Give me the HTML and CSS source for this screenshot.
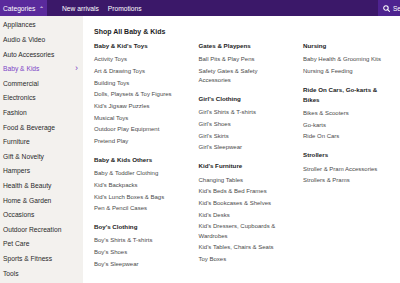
FILE: index.html
```html
<!DOCTYPE html>
<html lang="en">
<head>
    <meta charset="UTF-8">
    <meta name="viewport" content="width=device-width, initial-scale=1.0">
    <title>Categories</title>
    <link rel="stylesheet" href="styles.css">
</head>
<body>
    <header class="topbar">
        <button class="cat-btn">Categories <span class="caret">&#8963;</span></button>
        <nav class="top-links">
            <a href="#">New arrivals</a>
            <a href="#">Promotions</a>
        </nav>
        <button class="search-btn">
            <svg width="7" height="7" viewBox="0 0 10 10"><circle cx="4.2" cy="4.2" r="3.2" fill="none" stroke="#fff" stroke-width="1.5"/><line x1="6.6" y1="6.6" x2="9.2" y2="9.2" stroke="#fff" stroke-width="1.5" stroke-linecap="round"/></svg>
            <span>Search</span>
        </button>
    </header>

    <div class="menu">
        <ul class="sidebar">
            <li>Appliances</li>
            <li>Audio &amp; Video</li>
            <li>Auto Accessories</li>
            <li class="active">Baby &amp; Kids <span class="chev">&rsaquo;</span></li>
            <li>Commercial</li>
            <li>Electronics</li>
            <li>Fashion</li>
            <li>Food &amp; Beverage</li>
            <li>Furniture</li>
            <li>Gift &amp; Novelty</li>
            <li>Hampers</li>
            <li>Health &amp; Beauty</li>
            <li>Home &amp; Garden</li>
            <li>Occasions</li>
            <li>Outdoor Recreation</li>
            <li>Pet Care</li>
            <li>Sports &amp; Fitness</li>
            <li>Tools</li>
        </ul>

        <main class="panel">
            <h1 class="panel-title">Shop All Baby &amp; Kids</h1>
            <div class="columns">
                <div class="col">
                    <section class="group">
                        <h2>Baby &amp; Kid's Toys</h2>
                        <ul>
                            <li>Activity Toys</li>
                            <li>Art &amp; Drawing Toys</li>
                            <li>Building Toys</li>
                            <li>Dolls, Playsets &amp; Toy Figures</li>
                            <li>Kid's Jigsaw Puzzles</li>
                            <li>Musical Toys</li>
                            <li>Outdoor Play Equipment</li>
                            <li>Pretend Play</li>
                        </ul>
                    </section>
                    <section class="group">
                        <h2>Baby &amp; Kids Others</h2>
                        <ul>
                            <li>Baby &amp; Toddler Clothing</li>
                            <li>Kid's Backpacks</li>
                            <li>Kid's Lunch Boxes &amp; Bags</li>
                            <li>Pen &amp; Pencil Cases</li>
                        </ul>
                    </section>
                    <section class="group">
                        <h2>Boy's Clothing</h2>
                        <ul>
                            <li>Boy's Shirts &amp; T-shirts</li>
                            <li>Boy's Shoes</li>
                            <li>Boy's Sleepwear</li>
                        </ul>
                    </section>
                </div>
                <div class="col">
                    <section class="group">
                        <h2>Gates &amp; Playpens</h2>
                        <ul>
                            <li>Ball Pits &amp; Play Pens</li>
                            <li>Safety Gates &amp; Safety Accessories</li>
                        </ul>
                    </section>
                    <section class="group">
                        <h2>Girl's Clothing</h2>
                        <ul>
                            <li>Girl's Shirts &amp; T-shirts</li>
                            <li>Girl's Shoes</li>
                            <li>Girl's Skirts</li>
                            <li>Girl's Sleepwear</li>
                        </ul>
                    </section>
                    <section class="group">
                        <h2>Kid's Furniture</h2>
                        <ul>
                            <li>Changing Tables</li>
                            <li>Kid's Beds &amp; Bed Frames</li>
                            <li>Kid's Bookcases &amp; Shelves</li>
                            <li>Kid's Desks</li>
                            <li>Kid's Dressers, Cupboards &amp; Wardrobes</li>
                            <li>Kid's Tables, Chairs &amp; Seats</li>
                            <li>Toy Boxes</li>
                        </ul>
                    </section>
                </div>
                <div class="col">
                    <section class="group">
                        <h2>Nursing</h2>
                        <ul>
                            <li>Baby Health &amp; Grooming Kits</li>
                            <li>Nursing &amp; Feeding</li>
                        </ul>
                    </section>
                    <section class="group">
                        <h2>Ride On Cars, Go-karts &amp; Bikes</h2>
                        <ul>
                            <li>Bikes &amp; Scooters</li>
                            <li>Go-karts</li>
                            <li>Ride On Cars</li>
                        </ul>
                    </section>
                    <section class="group">
                        <h2>Strollers</h2>
                        <ul>
                            <li>Stroller &amp; Pram Accessories</li>
                            <li>Strollers &amp; Prams</li>
                        </ul>
                    </section>
                </div>
            </div>
        </main>
    </div>
</body>
</html>
```

FILE: styles.css
```css
body {
    font-family: "Liberation Sans", Arial, sans-serif;
    margin: 0;
    padding: 0;
    background-color: #ffffff;
    color: #222222;
    overflow: hidden;
}

ul {
    list-style: none;
    margin: 0;
    padding: 0;
}

.topbar {
    display: flex;
    align-items: stretch;
    height: 16px;
    background-color: #3b1869;
}

.cat-btn {
    display: flex;
    align-items: center;
    gap: 4px;
    width: 47px;
    padding: 0 0 0 3px;
    border: none;
    background-color: #5a2a9c;
    color: #ffffff;
    font-family: inherit;
    font-size: 6.7px;
}

.cat-btn .caret {
    font-size: 6px;
    line-height: 1;
    margin-top: 2px;
}

.top-links {
    display: flex;
    align-items: center;
    gap: 9px;
    margin-left: 15px;
    flex: 1;
}

.top-links a {
    color: #ffffff;
    text-decoration: none;
    font-size: 6.7px;
}

.search-btn {
    display: flex;
    align-items: center;
    gap: 3px;
    width: 22px;
    padding: 0 0 0 5px;
    border: none;
    background-color: #4e2390;
    color: #ffffff;
    font-family: inherit;
    font-size: 6.5px;
    overflow: hidden;
    white-space: nowrap;
}

.search-btn svg {
    flex-shrink: 0;
}

.menu {
    display: flex;
    height: 267px;
}

.sidebar {
    width: 83px;
    flex-shrink: 0;
    padding-top: 1.7px;
    background-color: #f3f1ee;
}

.sidebar li {
    display: flex;
    justify-content: space-between;
    align-items: center;
    height: 14.6px;
    padding: 0 5px 0 3px;
    font-size: 6.7px;
    color: #2a2a2a;
}

.sidebar li.active {
    color: #7d44c6;
}

.sidebar .chev {
    font-size: 9px;
    line-height: 1;
}

.panel {
    flex: 1;
    padding: 10.7px 0 0 11px;
}

.panel-title {
    margin: 0 0 4.3px;
    font-size: 7px;
    line-height: 10px;
    font-weight: bold;
    color: #1e1e1e;
}

.columns {
    display: grid;
    grid-template-columns: repeat(3, 88px);
    column-gap: 16.5px;
}

.group {
    margin-bottom: 8.5px;
}

.group h2 {
    margin: 0 0 4.3px;
    font-size: 6.2px;
    line-height: 10px;
    font-weight: bold;
    color: #222222;
}

.group li {
    margin-bottom: 2.4px;
    font-size: 6px;
    line-height: 9.3px;
    color: #4a4a4a;
}
```
